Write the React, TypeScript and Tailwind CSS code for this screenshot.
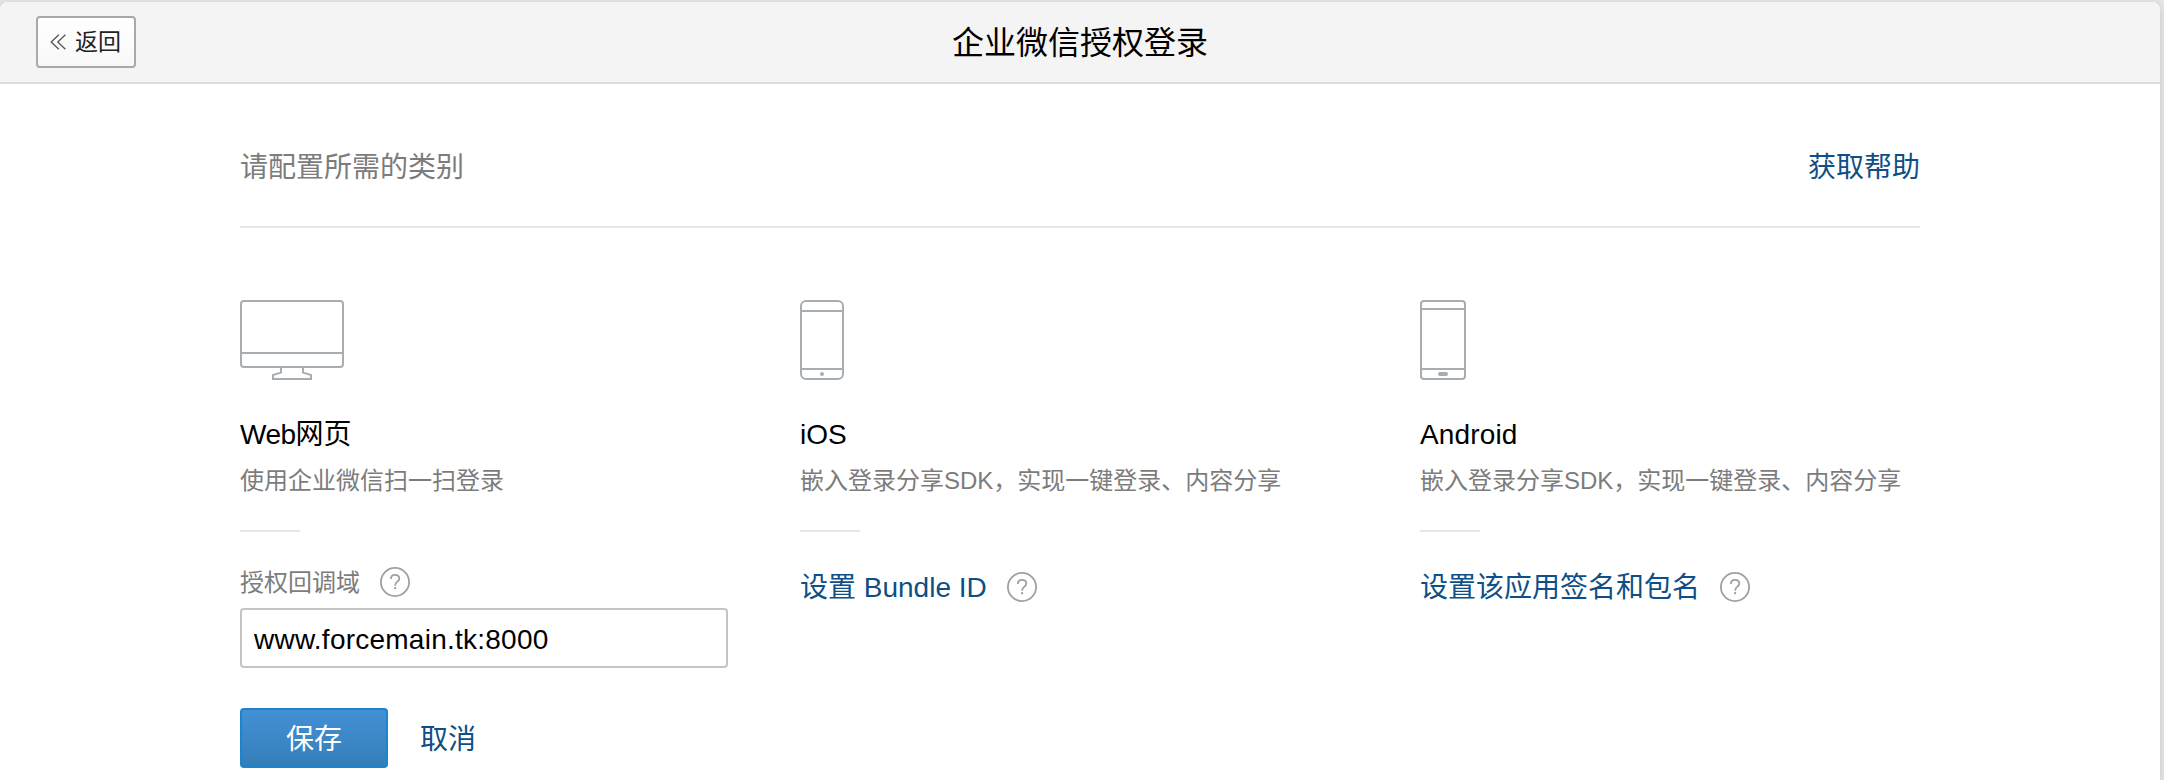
import type { ReactNode } from "react";

function DesktopIcon() {
  return (
    <svg width="104" height="80" viewBox="0 0 104 80" fill="none" stroke="#a8adb2" strokeWidth="2">
      <rect x="1" y="1" width="102" height="66" rx="3" />
      <path d="M1 53H103" />
      <path d="M41 68V72.6L33 75V79H71V75L63 72.6V68" />
    </svg>
  );
}

function IphoneIcon() {
  return (
    <svg width="44" height="80" viewBox="0 0 44 80" fill="none" stroke="#a8adb2" strokeWidth="2">
      <rect x="1" y="1" width="42" height="78" rx="5" />
      <path d="M1 11H43" />
      <path d="M1 69H43" />
      <circle cx="22" cy="74" r="2" fill="#a8adb2" stroke="none" />
    </svg>
  );
}

function AndroidIcon() {
  return (
    <svg width="46" height="80" viewBox="0 0 46 80" fill="none" stroke="#a8adb2" strokeWidth="2">
      <rect x="1" y="1" width="44" height="78" rx="3" />
      <path d="M1 9H45" />
      <path d="M1 69H45" />
      <rect x="18" y="72" width="10" height="4" rx="2" fill="#a8adb2" stroke="none" />
    </svg>
  );
}

function HelpIcon() {
  return (
    <svg width="30" height="30" viewBox="0 0 30 30" fill="none" stroke="#a0a0a0" className="shrink-0">
      <circle cx="15" cy="15" r="14.1" strokeWidth="1.8" />
      <path d="M10.9 11.9C10.9 9.4 12.7 7.9 15.1 7.9C17.5 7.9 19.3 9.4 19.3 11.5C19.3 13.2 18.3 14 17.1 14.9C15.8 15.9 15.1 16.6 15.1 18.7" strokeWidth="1.8" />
      <rect x="14.1" y="20.1" width="2" height="2.1" fill="#a0a0a0" stroke="none" />
    </svg>
  );
}

function Platform({ icon, title, desc, children }: { icon: ReactNode; title: ReactNode; desc: string; children: ReactNode }) {
  return (
    <section className="flex flex-col whitespace-nowrap">
      {icon}
      <h2 className="mt-[35px] text-[28px] leading-10 text-black">{title}</h2>
      <p className="mt-2 text-2xl leading-9 text-[#7c7c7c]">{desc}</p>
      <div className="mt-[31px] h-0.5 w-[60px] bg-[#e4e5ea]" />
      {children}
    </section>
  );
}

export default function App() {
  return (
    <div className="h-[780px] w-full overflow-hidden bg-[#e5e6e8] pt-0.5 pr-1 font-['Liberation_Sans','Noto_Sans_CJK_SC',sans-serif]">
      <div className="h-full rounded-t-lg bg-white shadow-[0_2px_8px_rgba(0,0,0,0.14)]">
        <header className="grid h-[82px] grid-cols-[1fr_auto_1fr] items-center rounded-t-lg border-b-2 border-[#d9dfe4] bg-[#f4f4f4] pl-9">
          <button className="-mt-px flex h-[52px] w-[100px] items-center rounded border-2 border-[#a9a9a9] bg-linear-to-b from-white to-[#f8f8f8] pl-3 text-[#222]">
            <svg width="17" height="16" viewBox="0 0 17 16" fill="none" stroke="#555" strokeWidth="1.3" className="mt-px">
              <path d="M8.8 0.7L1.2 8L8.8 15.3M15.4 0.7L7.8 8L15.4 15.3" />
            </svg>
            <span className="ml-2 pt-px text-[23px] leading-8">返回</span>
          </button>
          <h1 className="mr-9 pt-0.5 text-[32px] leading-10 text-black">企业微信授权登录</h1>
        </header>

        <main className="ml-60 w-[1680px]">
          <div className="flex h-[144px] items-center justify-between border-b-2 border-[#e4e5ea] pt-[42px] pb-4 text-[28px] leading-10">
            <p className="text-[#7c7c7c]">请配置所需的类别</p>
            <a className="text-[#0d4f86]">获取帮助</a>
          </div>

          <div className="mt-[72px] grid grid-cols-[560px_620px_500px]">
            <Platform
              icon={<DesktopIcon />}
              title={
                <>
                  <span className="tracking-[-0.5px]">Web</span>网页
                </>
              }
              desc="使用企业微信扫一扫登录"
            >
              <div className="mt-[35px] flex h-[30px] items-center gap-5">
                <label className="pt-0.5 text-2xl leading-[30px] text-[#7c7c7c]">授权回调域</label>
                <HelpIcon />
              </div>
              <input
                className="mt-[11px] h-[60px] w-[488px] rounded border-2 border-[#c4c4c4] bg-white px-3 pt-[3px] text-[28px] tracking-[0.24px] text-black outline-none"
                defaultValue="www.forcemain.tk:8000"
              />
              <div className="mt-10 flex items-center gap-8 text-[28px] leading-10">
                <button className="h-[60px] w-[148px] rounded border-2 border-[#1e83cd] bg-linear-to-b from-[#4490d6] to-[#347eb8] pt-1 text-white">保存</button>
                <a className="pt-1 text-[#0d4f86]">取消</a>
              </div>
            </Platform>

            <Platform icon={<IphoneIcon />} title="iOS" desc="嵌入登录分享SDK，实现一键登录、内容分享">
              <div className="mt-10 flex h-[30px] items-center gap-5">
                <a className="pt-px text-[28px] leading-[30px] text-[#0d4f86]">设置 Bundle ID</a>
                <HelpIcon />
              </div>
            </Platform>

            <Platform
              icon={<AndroidIcon />}
              title={<span className="tracking-[0.15px]">Android</span>}
              desc="嵌入登录分享SDK，实现一键登录、内容分享"
            >
              <div className="mt-10 flex h-[30px] items-center gap-5">
                <a className="pt-px text-[28px] leading-[30px] text-[#0d4f86]">设置该应用签名和包名</a>
                <HelpIcon />
              </div>
            </Platform>
          </div>
        </main>
      </div>
    </div>
  );
}
